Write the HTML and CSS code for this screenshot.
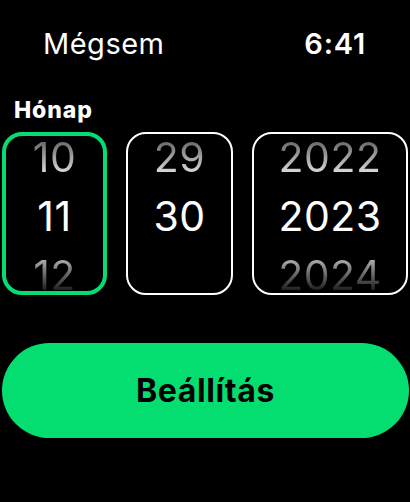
FILE: index.html
```html
<!DOCTYPE html>
<html lang="hu">
<head>
<meta charset="utf-8">
<link rel="stylesheet" href="styles.css">
</head>
<body>
<div class="screen">
  <header class="top">
    <span class="cancel">Mégsem</span>
    <span class="time">6:41</span>
  </header>
  <div class="label">Hónap</div>
  <div class="pickers">
    <div class="picker picker-month active">
      <div class="col">
        <span class="num prev">10</span>
        <span class="num cur">11</span>
        <span class="num next">12</span>
      </div>
    </div>
    <div class="picker picker-day">
      <div class="col">
        <span class="num prev">29</span>
        <span class="num cur">30</span>
        <span class="num next"></span>
      </div>
    </div>
    <div class="picker picker-year">
      <div class="col">
        <span class="num prev">2022</span>
        <span class="num cur">2023</span>
        <span class="num next">2024</span>
      </div>
    </div>
  </div>
  <button class="set">Beállítás</button>
</div>
</body>
</html>
```
FILE: styles.css
```css
html, body {
  margin: 0;
  padding: 0;
  background: #000;
}
.screen {
  width: 410px;
  height: 502px;
  background: #000;
  color: #fff;
  font-family: Inter, "Noto Sans", "DejaVu Sans", sans-serif;
  display: flex;
  flex-direction: column;
  overflow: hidden;
}
.top {
  display: flex;
  justify-content: space-between;
  align-items: baseline;
  padding: 26px 44px 0 43px;
  height: 40px;
}
.cancel {
  font-size: 29px;
  font-weight: 400;
  letter-spacing: 0.5px;
}
.time {
  font-size: 29px;
  font-weight: 600;
  letter-spacing: 0.8px;
}
.label {
  margin-top: 32px;
  padding-left: 14px;
  font-size: 23px;
  font-weight: 800;
  line-height: 24px;
  letter-spacing: 0.9px;
}
.pickers {
  display: flex;
  gap: 19px;
  margin-top: 10px;
  padding-left: 2px;
}
.picker {
  box-sizing: border-box;
  height: 163px;
  border: 2.5px solid #fff;
  border-radius: 20px;
  overflow: hidden;
  display: flex;
  justify-content: center;
  align-items: center;
}
.picker.active {
  border: 4px solid #05dc71;
}
.picker-month { width: 105px; }
.picker-day { width: 107px; }
.picker-year { width: 156px; }
.col {
  display: flex;
  flex-direction: column;
  align-items: center;
  margin-top: 6px;
}
.num {
  display: block;
  height: 59px;
  line-height: 59px;
  font-size: 41px;
  font-weight: 400;
  letter-spacing: 0.5px;
}
.num.cur {
  color: #fff;
}
.num.prev {
  background: linear-gradient(to bottom, #6d6d6d 25%, #d8d8d8 75%);
  -webkit-background-clip: text;
  background-clip: text;
  color: transparent;
}
.num.next {
  background: linear-gradient(to bottom, #a8a8a8 25%, #1e1e1e 75%);
  -webkit-background-clip: text;
  background-clip: text;
  color: transparent;
}
.set {
  margin: 48px 1px 0 2px;
  height: 95px;
  border: none;
  border-radius: 48px;
  background: #04de71;
  color: #000;
  font-family: Inter, "Noto Sans", "DejaVu Sans", sans-serif;
  font-size: 32px;
  font-weight: 700;
  padding: 0;
  letter-spacing: 0.6px;
}
```
